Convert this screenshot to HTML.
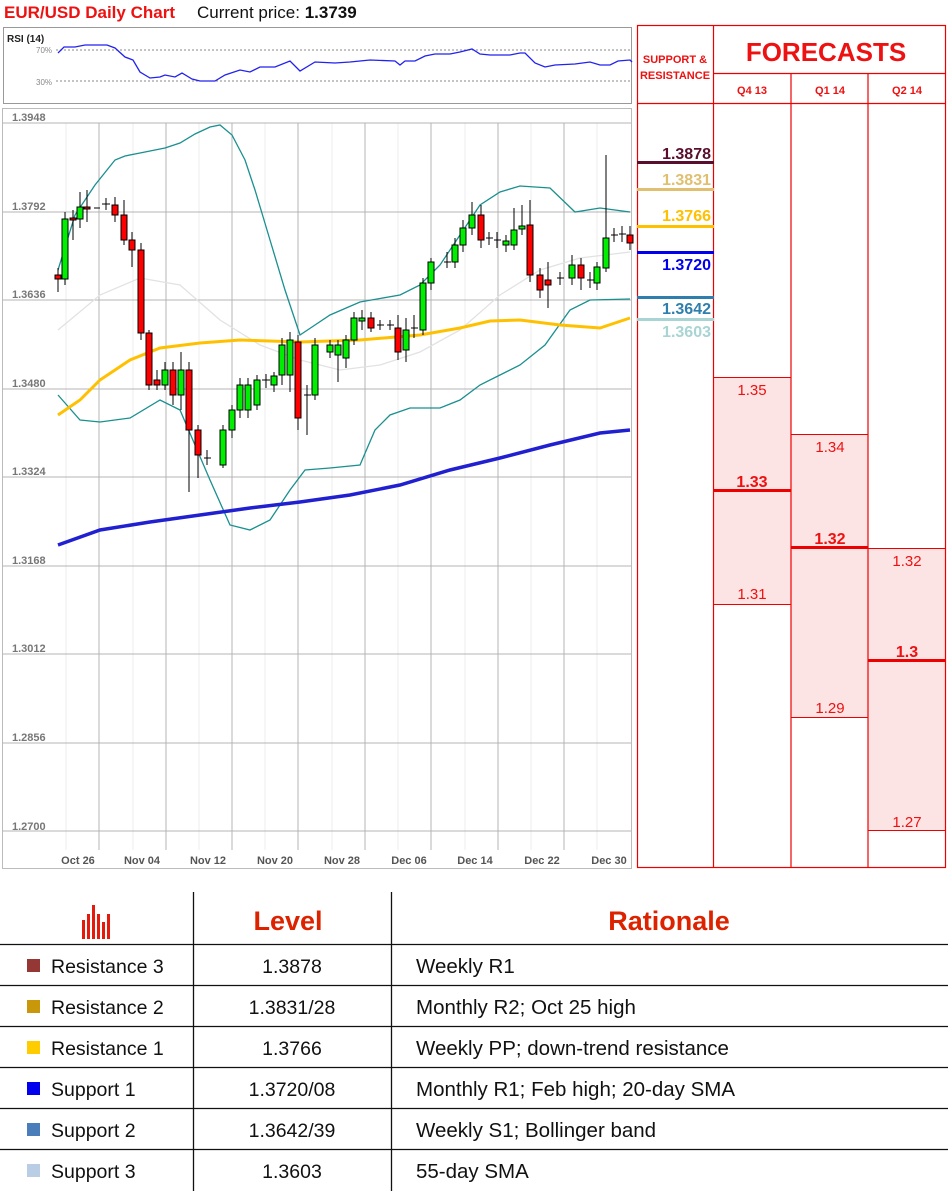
<!DOCTYPE html>
<html><head><meta charset="utf-8"><style>
body{margin:0;width:948px;height:1191px;background:#fff;overflow:hidden;font-family:"Liberation Sans",sans-serif}
svg text{font-family:"Liberation Sans",sans-serif}
</style></head><body>
<svg width="948" height="1191" viewBox="0 0 948 1191" xmlns="http://www.w3.org/2000/svg">
<text x="4" y="18" font-size="17" font-weight="bold" fill="#ee1111">EUR/USD Daily Chart</text>
<text x="197" y="18" font-size="17" fill="#111">Current price: <tspan font-weight="bold">1.3739</tspan></text>
<rect x="3.5" y="27.5" width="628" height="76" fill="#fff" stroke="#999"/>
<text x="7" y="42" font-size="10" font-weight="bold" fill="#222">RSI (14)</text>
<text x="36" y="53" font-size="8" fill="#888">70%</text>
<text x="36" y="85" font-size="8" fill="#888">30%</text>
<line x1="56" y1="50" x2="631" y2="50" stroke="#888" stroke-dasharray="2,2"/>
<line x1="56" y1="81" x2="631" y2="81" stroke="#888" stroke-dasharray="2,2"/>
<polyline fill="none" stroke="#2222ee" stroke-width="1.3" points="58,53 64,47 75,47 85,45 107,45 115,48 125,57 133,60 140,72 150,78 160,77 165,75 175,77 182,73 192,79 200,81 215,81 225,75 240,70 250,72 260,67 275,67 290,61 300,71 315,62 335,63 350,62 370,60 395,61 400,65 405,61 415,61 425,56 435,54 450,54 460,52 472,49 480,54 490,55 510,55 520,53 525,53 535,63 545,67 555,65 575,64 590,62 600,65 610,65 618,61 630,60 632,62"/>
<rect x="2.5" y="108.5" width="629" height="760" fill="#fff" stroke="#bbb"/>
<g stroke="#ececec">
<line x1="66" y1="123" x2="66" y2="850"/><line x1="133" y1="123" x2="133" y2="850"/><line x1="199" y1="123" x2="199" y2="850"/><line x1="265" y1="123" x2="265" y2="850"/><line x1="332" y1="123" x2="332" y2="850"/><line x1="398" y1="123" x2="398" y2="850"/><line x1="465" y1="123" x2="465" y2="850"/><line x1="531" y1="123" x2="531" y2="850"/><line x1="597" y1="123" x2="597" y2="850"/>
</g>
<g stroke="#b4b4b4">
<line x1="99" y1="123" x2="99" y2="850"/><line x1="166" y1="123" x2="166" y2="850"/><line x1="232" y1="123" x2="232" y2="850"/><line x1="298" y1="123" x2="298" y2="850"/><line x1="365" y1="123" x2="365" y2="850"/><line x1="431" y1="123" x2="431" y2="850"/><line x1="498" y1="123" x2="498" y2="850"/><line x1="564" y1="123" x2="564" y2="850"/>
<line x1="2" y1="123" x2="631" y2="123"/><line x1="2" y1="212" x2="631" y2="212"/><line x1="2" y1="300" x2="631" y2="300"/><line x1="2" y1="389" x2="631" y2="389"/><line x1="2" y1="477" x2="631" y2="477"/><line x1="2" y1="566" x2="631" y2="566"/><line x1="2" y1="654" x2="631" y2="654"/><line x1="2" y1="743" x2="631" y2="743"/><line x1="2" y1="831" x2="631" y2="831"/>
</g>
<g font-size="11" fill="#777" font-weight="bold">
<text x="12" y="121">1.3948</text><text x="12" y="210">1.3792</text><text x="12" y="298">1.3636</text><text x="12" y="387">1.3480</text><text x="12" y="475">1.3324</text><text x="12" y="564">1.3168</text><text x="12" y="652">1.3012</text><text x="12" y="741">1.2856</text><text x="12" y="830">1.2700</text>
</g>
<g font-size="11" fill="#555" font-weight="bold" text-anchor="middle">
<text x="78" y="864">Oct 26</text><text x="142" y="864">Nov 04</text><text x="208" y="864">Nov 12</text><text x="275" y="864">Nov 20</text><text x="342" y="864">Nov 28</text><text x="409" y="864">Dec 06</text><text x="475" y="864">Dec 14</text><text x="542" y="864">Dec 22</text><text x="609" y="864">Dec 30</text>
</g>
<polyline fill="none" stroke="#e2e2e2" stroke-width="1.3" points="58,330 100,295 140,278 180,285 220,320 260,345 300,360 340,370 380,365 420,352 460,330 500,295 540,270 580,258 630,252"/>
<polyline fill="none" stroke="#1a8f8f" stroke-width="1.3" points="58,270 75,215 95,185 115,160 125,156 140,153 165,148 180,143 195,134 210,127 220,125 232,135 245,160 255,190 270,240 285,290 300,335 315,325 330,315 360,302 400,295 420,285 440,265 460,235 480,205 500,192 520,186 550,188 575,212 600,208 630,212"/>
<polyline fill="none" stroke="#1a8f8f" stroke-width="1.3" points="58,395 80,420 100,422 130,418 160,400 180,410 195,445 210,480 230,525 250,530 270,520 290,490 305,470 330,468 360,465 375,430 390,415 410,408 440,408 460,400 480,385 500,375 520,365 545,345 570,310 590,300 630,299"/>
<polyline fill="none" stroke="#ffc000" stroke-width="3" points="58,415 80,400 100,380 130,360 160,348 200,343 240,340 300,342 360,340 420,335 460,328 490,321 520,320 560,325 600,328 630,318"/>
<polyline fill="none" stroke="#2020d0" stroke-width="3.5" points="58,545 100,530 150,522 200,515 250,508 300,502 350,495 400,485 450,470 500,458 550,445 600,433 630,430"/>
<g stroke="#000" stroke-width="1">
<line x1="58" y1="268" x2="58" y2="292"/><rect x="55" y="275" width="6" height="4" fill="#f00"/>
<line x1="65" y1="212" x2="65" y2="285"/><rect x="62" y="219" width="6" height="60" fill="#0e0"/>
<line x1="73" y1="210" x2="73" y2="240"/><rect x="70" y="218" width="6" height="2" fill="#f00"/>
<line x1="80" y1="192" x2="80" y2="228"/><rect x="77" y="207" width="6" height="12" fill="#0e0"/>
<line x1="87" y1="190" x2="87" y2="222"/><rect x="84" y="207" width="6" height="2" fill="#f00"/>
<line x1="94" y1="208" x2="100" y2="208"/>
<line x1="106" y1="198" x2="106" y2="210"/><line x1="102" y1="204" x2="110" y2="204"/>
<line x1="115" y1="197" x2="115" y2="222"/><rect x="112" y="205" width="6" height="10" fill="#f00"/>
<line x1="124" y1="200" x2="124" y2="245"/><rect x="121" y="215" width="6" height="25" fill="#f00"/>
<line x1="132" y1="232" x2="132" y2="267"/><rect x="129" y="240" width="6" height="10" fill="#f00"/>
<line x1="141" y1="243" x2="141" y2="340"/><rect x="138" y="250" width="6" height="83" fill="#f00"/>
<line x1="149" y1="330" x2="149" y2="390"/><rect x="146" y="333" width="6" height="52" fill="#f00"/>
<line x1="157" y1="370" x2="157" y2="390"/><rect x="154" y="380" width="6" height="5" fill="#f00"/>
<line x1="165" y1="362" x2="165" y2="390"/><rect x="162" y="370" width="6" height="15" fill="#0e0"/>
<line x1="173" y1="362" x2="173" y2="405"/><rect x="170" y="370" width="6" height="25" fill="#f00"/>
<line x1="181" y1="352" x2="181" y2="410"/><rect x="178" y="370" width="6" height="25" fill="#0e0"/>
<line x1="189" y1="362" x2="189" y2="492"/><rect x="186" y="370" width="6" height="60" fill="#f00"/>
<line x1="198" y1="425" x2="198" y2="478"/><rect x="195" y="430" width="6" height="25" fill="#f00"/>
<line x1="207" y1="450" x2="207" y2="465"/><line x1="204" y1="458" x2="211" y2="458"/>
<line x1="223" y1="425" x2="223" y2="468"/><rect x="220" y="430" width="6" height="35" fill="#0e0"/>
<line x1="232" y1="405" x2="232" y2="438"/><rect x="229" y="410" width="6" height="20" fill="#0e0"/>
<line x1="240" y1="378" x2="240" y2="418"/><rect x="237" y="385" width="6" height="25" fill="#0e0"/>
<line x1="248" y1="378" x2="248" y2="418"/><rect x="245" y="385" width="6" height="25" fill="#0e0"/>
<line x1="257" y1="375" x2="257" y2="410"/><rect x="254" y="380" width="6" height="25" fill="#0e0"/>
<line x1="266" y1="374" x2="266" y2="388"/><line x1="262" y1="380" x2="270" y2="380"/>
<line x1="274" y1="372" x2="274" y2="392"/><rect x="271" y="376" width="6" height="9" fill="#0e0"/>
<line x1="282" y1="338" x2="282" y2="385"/><rect x="279" y="345" width="6" height="30" fill="#0e0"/>
<line x1="290" y1="332" x2="290" y2="392"/><rect x="287" y="340" width="6" height="35" fill="#0e0"/>
<line x1="298" y1="335" x2="298" y2="430"/><rect x="295" y="342" width="6" height="76" fill="#f00"/>
<line x1="307" y1="385" x2="307" y2="435"/><line x1="304" y1="395" x2="311" y2="395"/>
<line x1="315" y1="338" x2="315" y2="400"/><rect x="312" y="345" width="6" height="50" fill="#0e0"/>
<line x1="330" y1="340" x2="330" y2="358"/><rect x="327" y="345" width="6" height="7" fill="#0e0"/>
<line x1="338" y1="340" x2="338" y2="382"/><rect x="335" y="345" width="6" height="10" fill="#0e0"/>
<line x1="346" y1="335" x2="346" y2="368"/><rect x="343" y="340" width="6" height="18" fill="#0e0"/>
<line x1="354" y1="312" x2="354" y2="345"/><rect x="351" y="318" width="6" height="22" fill="#0e0"/>
<line x1="362" y1="310" x2="362" y2="330"/><rect x="359" y="318" width="6" height="3" fill="#0e0"/>
<line x1="371" y1="312" x2="371" y2="332"/><rect x="368" y="318" width="6" height="10" fill="#f00"/>
<line x1="380" y1="320" x2="380" y2="330"/><line x1="377" y1="325" x2="384" y2="325"/>
<line x1="390" y1="320" x2="390" y2="330"/><line x1="387" y1="325" x2="394" y2="325"/>
<line x1="398" y1="315" x2="398" y2="360"/><rect x="395" y="328" width="6" height="24" fill="#f00"/>
<line x1="406" y1="318" x2="406" y2="362"/><rect x="403" y="330" width="6" height="20" fill="#0e0"/>
<line x1="414" y1="315" x2="414" y2="338"/><line x1="411" y1="328" x2="418" y2="328"/>
<line x1="423" y1="278" x2="423" y2="335"/><rect x="420" y="283" width="6" height="47" fill="#0e0"/>
<line x1="431" y1="258" x2="431" y2="290"/><rect x="428" y="262" width="6" height="21" fill="#0e0"/>
<line x1="447" y1="252" x2="447" y2="268"/><line x1="444" y1="262" x2="451" y2="262"/>
<line x1="455" y1="238" x2="455" y2="268"/><rect x="452" y="245" width="6" height="17" fill="#0e0"/>
<line x1="463" y1="220" x2="463" y2="252"/><rect x="460" y="228" width="6" height="17" fill="#0e0"/>
<line x1="472" y1="202" x2="472" y2="235"/><rect x="469" y="215" width="6" height="13" fill="#0e0"/>
<line x1="481" y1="205" x2="481" y2="248"/><rect x="478" y="215" width="6" height="25" fill="#f00"/>
<line x1="489" y1="232" x2="489" y2="245"/><line x1="486" y1="238" x2="493" y2="238"/>
<line x1="497" y1="232" x2="497" y2="248"/><line x1="494" y1="240" x2="501" y2="240"/>
<line x1="506" y1="235" x2="506" y2="252"/><rect x="503" y="241" width="6" height="4" fill="#0e0"/>
<line x1="514" y1="208" x2="514" y2="250"/><rect x="511" y="230" width="6" height="15" fill="#0e0"/>
<line x1="522" y1="205" x2="522" y2="235"/><rect x="519" y="226" width="6" height="3" fill="#0e0"/>
<line x1="530" y1="200" x2="530" y2="282"/><rect x="527" y="225" width="6" height="50" fill="#f00"/>
<line x1="540" y1="268" x2="540" y2="298"/><rect x="537" y="275" width="6" height="15" fill="#f00"/>
<line x1="548" y1="262" x2="548" y2="308"/><rect x="545" y="280" width="6" height="5" fill="#f00"/>
<line x1="560" y1="272" x2="560" y2="285"/><line x1="557" y1="278" x2="564" y2="278"/>
<line x1="572" y1="255" x2="572" y2="285"/><rect x="569" y="265" width="6" height="13" fill="#0e0"/>
<line x1="581" y1="258" x2="581" y2="290"/><rect x="578" y="265" width="6" height="13" fill="#f00"/>
<line x1="590" y1="272" x2="590" y2="288"/><line x1="587" y1="280" x2="594" y2="280"/>
<line x1="597" y1="262" x2="597" y2="290"/><rect x="594" y="267" width="6" height="16" fill="#0e0"/>
<line x1="606" y1="155" x2="606" y2="272"/><rect x="603" y="238" width="6" height="30" fill="#0e0"/>
<line x1="614" y1="228" x2="614" y2="242"/><line x1="611" y1="235" x2="618" y2="235"/>
<line x1="622" y1="226" x2="622" y2="242"/><line x1="619" y1="234" x2="626" y2="234"/>
<line x1="630" y1="226" x2="630" y2="250"/><rect x="627" y="235" width="6" height="8" fill="#f00"/>
</g>
<rect x="714" y="377" width="77" height="227" fill="#fde4e4"/>
<rect x="791" y="434" width="77" height="283" fill="#fde4e4"/>
<rect x="868" y="548" width="77" height="282" fill="#fde4e4"/>
<g stroke="#e00" stroke-width="1.2" fill="none">
<rect x="637.5" y="25.5" width="308" height="842"/>
<line x1="713.5" y1="25" x2="713.5" y2="868"/>
<line x1="791" y1="73" x2="791" y2="868"/>
<line x1="868" y1="73" x2="868" y2="868"/>
<line x1="713" y1="73.5" x2="946" y2="73.5"/>
<line x1="637" y1="103.5" x2="946" y2="103.5"/>
<line x1="714" y1="377.5" x2="791" y2="377.5" stroke-width="1"/>
<line x1="714" y1="604.5" x2="791" y2="604.5" stroke-width="1"/>
<line x1="791" y1="434.5" x2="868" y2="434.5" stroke-width="1"/>
<line x1="791" y1="717.5" x2="868" y2="717.5" stroke-width="1"/>
<line x1="868" y1="548.5" x2="946" y2="548.5" stroke-width="1"/>
<line x1="868" y1="830.5" x2="946" y2="830.5" stroke-width="1"/>
</g>
<g fill="#e00">
<rect x="714" y="489" width="77" height="3"/>
<rect x="791" y="546" width="77" height="3"/>
<rect x="868" y="659" width="78" height="3"/>
</g>
<g fill="#ee1111" font-weight="bold" text-anchor="middle">
<text x="675" y="63" font-size="11">SUPPORT &amp;</text>
<text x="675" y="79" font-size="11">RESISTANCE</text>
<text x="826" y="61" font-size="26">FORECASTS</text>
<text x="752" y="94" font-size="11">Q4 13</text>
<text x="830" y="94" font-size="11">Q1 14</text>
<text x="907" y="94" font-size="11">Q2 14</text>
<text x="752" y="487" font-size="16">1.33</text>
<text x="830" y="544" font-size="16">1.32</text>
<text x="907" y="657" font-size="16">1.3</text>
</g>
<g fill="#ee1111" font-size="15" text-anchor="middle">
<text x="752" y="395">1.35</text><text x="752" y="599">1.31</text>
<text x="830" y="452">1.34</text><text x="830" y="713">1.29</text>
<text x="907" y="566">1.32</text><text x="907" y="827">1.27</text>
</g>
<g>
<rect x="637" y="161" width="77" height="3" fill="#5a0e2e"/>
<rect x="637" y="188" width="77" height="3" fill="#e0c070"/>
<rect x="637" y="225" width="77" height="3" fill="#ffc000"/>
<rect x="637" y="251" width="77" height="3" fill="#0000ee"/>
<rect x="637" y="296" width="77" height="3" fill="#2e7fae"/>
<rect x="637" y="318" width="77" height="3" fill="#a8d4d4"/>
</g>
<g font-size="16" font-weight="bold" text-anchor="end">
<text x="711" y="159" fill="#5a0e2e">1.3878</text>
<text x="711" y="185" fill="#e0c070">1.3831</text>
<text x="711" y="221" fill="#ffc000">1.3766</text>
<text x="711" y="270" fill="#0000ee">1.3720</text>
<text x="711" y="314" fill="#2e7fae">1.3642</text>
<text x="711" y="337" fill="#a8d4d4">1.3603</text>
</g>
<g fill="#e41b0c">
<rect x="82" y="920" width="3" height="19"/><rect x="87" y="914" width="3" height="25"/><rect x="92" y="905" width="3" height="34"/><rect x="97" y="914" width="3" height="25"/><rect x="102" y="922" width="3" height="17"/><rect x="107" y="914" width="3" height="25"/>
</g>
<g fill="#dd2200" font-weight="bold" text-anchor="middle" font-size="27">
<text x="288" y="930">Level</text>
<text x="669" y="930">Rationale</text>
</g>
<g stroke="#111" stroke-width="1.3">
<line x1="193.5" y1="892" x2="193.5" y2="1191"/>
<line x1="391.5" y1="892" x2="391.5" y2="1191"/>
<line x1="0" y1="944.5" x2="948" y2="944.5"/>
<line x1="0" y1="985.5" x2="948" y2="985.5"/>
<line x1="0" y1="1026.5" x2="948" y2="1026.5"/>
<line x1="0" y1="1067.5" x2="948" y2="1067.5"/>
<line x1="0" y1="1108.5" x2="948" y2="1108.5"/>
<line x1="0" y1="1149.5" x2="948" y2="1149.5"/>
</g>
<rect x="27" y="959" width="13" height="13" fill="#953735"/>
<rect x="27" y="1000" width="13" height="13" fill="#c8980a"/>
<rect x="27" y="1041" width="13" height="13" fill="#ffcc00"/>
<rect x="27" y="1082" width="13" height="13" fill="#0000ee"/>
<rect x="27" y="1123" width="13" height="13" fill="#4a7ebb"/>
<rect x="27" y="1164" width="13" height="13" fill="#b9cde5"/>
<g font-size="19.5" fill="#111">
<text x="51" y="973">Resistance 3</text>
<text x="51" y="1014">Resistance 2</text>
<text x="51" y="1055">Resistance 1</text>
<text x="51" y="1096">Support 1</text>
<text x="51" y="1137">Support 2</text>
<text x="51" y="1178">Support 3</text>
<text x="292" y="973" text-anchor="middle">1.3878</text>
<text x="292" y="1014" text-anchor="middle">1.3831/28</text>
<text x="292" y="1055" text-anchor="middle">1.3766</text>
<text x="292" y="1096" text-anchor="middle">1.3720/08</text>
<text x="292" y="1137" text-anchor="middle">1.3642/39</text>
<text x="292" y="1178" text-anchor="middle">1.3603</text>
</g>
<g font-size="20.5" fill="#111">
<text x="416" y="973">Weekly R1</text>
<text x="416" y="1014">Monthly R2; Oct 25 high</text>
<text x="416" y="1055">Weekly PP; down-trend resistance</text>
<text x="416" y="1096">Monthly R1; Feb high; 20-day SMA</text>
<text x="416" y="1137">Weekly S1; Bollinger band</text>
<text x="416" y="1178">55-day SMA</text>
</g>
</svg>
</body></html>
